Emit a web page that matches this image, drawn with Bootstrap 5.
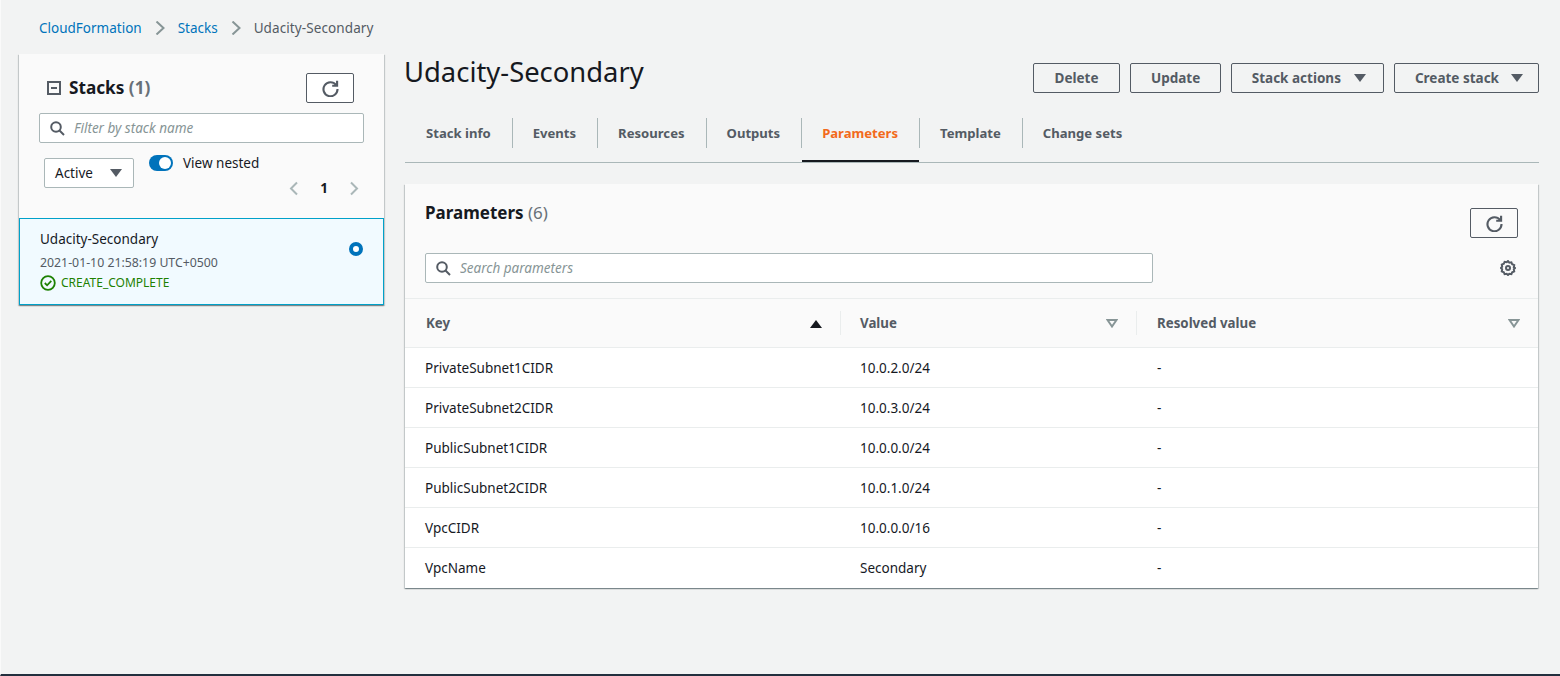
<!DOCTYPE html>
<html lang="en">
<head>
<meta charset="utf-8">
<title>Udacity-Secondary</title>
<link href="https://cdn.jsdelivr.net/npm/bootstrap@5.3.0/dist/css/bootstrap.min.css" rel="stylesheet">
<style>
html,body{height:676px;overflow:hidden}
body{background:#f2f3f3;font-family:"Noto Sans","Liberation Sans",sans-serif;font-size:13.5px;color:#16191f;letter-spacing:0;border-left:1px solid #fafafa;border-bottom:2px solid #232f3e}
.page-wrap{padding:0 20px 0 18px;height:674px}
.crumbs{height:54px;padding-left:20px;gap:12px;padding-top:2px;color:#545b64}
.crumbs a{color:#0073bb;text-decoration:none}
.crumbs span{letter-spacing:.1px}
.crumbs svg{width:12px;height:14px}
.side-col{width:365px;flex:none}
.main-col{width:1134px;margin-left:21px;margin-top:-54px;flex:none}
.side-panel{background:#fafafa;box-shadow:0 1px 1px rgba(0,28,36,.3),1px 1px 1px rgba(0,28,36,.15),-1px 1px 1px rgba(0,28,36,.15)}
.side-head{height:164px;position:relative;padding:0 20px}
.side-title{font-size:17.2px;font-weight:700;line-height:22px;margin:0}
.muted-count{color:#687078;font-weight:700}
.icon-btn{width:48px;height:30px;background:#fff;border:1px solid #545b64;border-radius:2px;padding:0;display:flex;align-items:center;justify-content:center}
.icon-btn.flush{background:transparent}
.search-box{height:30px;background:#fff;border:1px solid #aab7b8;border-radius:2px;padding:0 10px;gap:9px}
.search-box input{border:0;outline:0;background:transparent;flex:1;font-style:italic;font-size:13.5px;padding:0;color:#16191f;font-family:inherit;min-width:0}
.search-box input::placeholder{color:#879596;opacity:1}
.state-select{width:90px;height:30px;background:#fff;border:1px solid #aab7b8;border-radius:2px;padding:0 11px 0 10px;color:#16191f}
.toggle-pill{width:24px;height:16px;border-radius:8px;background:#0073bb;position:relative;display:block;flex:none}
.toggle-pill::after{content:"";position:absolute;right:2px;top:2px;width:12px;height:12px;background:#fff;border-radius:50%}
.pager{font-weight:700;gap:20px}
.stack-item{height:87px;background:#f1faff;border:1px solid #00a1c9;padding:10px 20px 0 20px;position:relative}
.stack-name{line-height:20px}
.stack-date{font-size:12.3px;line-height:16px;color:#545b64;margin-top:6px}
.stack-status{font-size:12px;line-height:16px;color:#1d8102;gap:5px;margin-top:4px}
.radio-dot{position:absolute;right:20px;top:23px;width:14px;height:14px;border-radius:50%;border:4px solid #0073bb;background:#fff}
.page-title{font-size:27.4px;font-weight:400;line-height:36px;margin:0}
.top-row{height:109px;padding-top:63px;position:relative}
.title-spot{position:absolute;left:-1px;top:54px}
.act-btn{height:30px;background:transparent;border:1px solid #545b64;border-radius:2px;color:#545b64;font-weight:700;font-size:13.5px;padding:1px 20px 0;display:flex;align-items:center;gap:12px;line-height:1}
.act-btn svg{margin-top:-1px}
.act-btn.btn-delete{padding-left:21px;padding-right:21px}
.act-btn.btn-update{padding-left:19.5px;padding-right:19.5px}
.act-btn.caret-wide{padding-right:17px;gap:13px}
.act-btn.caret-slim{padding-right:15px}
.tab-bar{height:54px;border-bottom:1px solid #aab7b8}
.tab-item{height:53px;padding:0 21px;display:flex;align-items:center;font-weight:700;font-size:13.1px;color:#545b64;position:relative;padding-bottom:3px;text-decoration:none}
.tab-item+.tab-item::before{content:"";position:absolute;left:0;top:9px;height:30px;width:1px;background:#aab7b8}
.tab-item.is-on{color:#f26a1b}
.tab-item.is-on::after{content:"";position:absolute;left:1px;right:0;bottom:0;height:2px;background:#16191f}
.param-card{margin-top:21px;margin-right:1px;background:#fff;box-shadow:0 1px 1px rgba(0,28,36,.3),1px 1px 1px rgba(0,28,36,.15),-1px 1px 1px rgba(0,28,36,.15)}
.param-head{height:115px;background:#fafafa;padding:0 20px;position:relative;border-bottom:1px solid #eaeded}
.param-title{font-size:17px;font-weight:700;line-height:22px;margin:0;padding-top:18px}
.param-title span{color:#687078;font-weight:400}
.head-refresh{position:absolute;right:20px;top:24px}
.head-search{position:absolute;left:20px;top:69px;width:728px}
.head-gear{position:absolute;right:22px;top:76px;line-height:0}
.param-table{margin:0;table-layout:fixed;width:100%;font-size:13.5px}
.param-table th{height:48px;background:#fafafa;color:#545b64;font-weight:700;font-size:13.3px;padding:2px 18px 0 20px;border-bottom:1px solid #eaeded;position:relative;vertical-align:middle}
.param-table th:first-child{padding-left:21px}
.param-table th+th::before{content:"";position:absolute;left:0;top:12px;height:24px;width:1px;background:#eaeded}
.param-table td{height:40px;padding:2px 20px 0;color:#16191f;border-bottom:1px solid #eaeded;vertical-align:middle;line-height:18px}
.param-table tr:last-child td{border-bottom:0;height:41px;padding-top:0}
.param-table th:nth-child(3),.param-table td:nth-child(3){padding-left:21px}
</style>
</head>
<body>
<div class="page-wrap">
  <nav class="crumbs d-flex align-items-center">
    <a href="#">CloudFormation</a>
    <svg viewBox="0 0 12 14" fill="none" stroke="#879596" stroke-width="2"><path d="M2.5.5l7 6.5-7 6.5"/></svg>
    <a href="#">Stacks</a>
    <svg viewBox="0 0 12 14" fill="none" stroke="#879596" stroke-width="2"><path d="M2.5.5l7 6.5-7 6.5"/></svg>
    <span>Udacity-Secondary</span>
  </nav>
  <div class="d-flex align-items-start">
    <aside class="side-col">
      <div class="side-panel">
        <div class="side-head">
          <div class="d-flex align-items-center justify-content-between" style="height:30px;position:relative;top:19px">
            <div class="d-flex align-items-center" style="padding-left:8px;gap:8px">
              <svg width="14" height="14" viewBox="0 0 14 14" fill="none" stroke="#545b64" stroke-width="2"><rect x="1" y="1" width="12" height="12"/><path d="M4 7h6"/></svg>
              <h2 class="side-title">Stacks <span class="muted-count">(1)</span></h2>
            </div>
            <button class="icon-btn" aria-label="Refresh" style="margin-right:10px">
              <svg width="17" height="17" viewBox="0 0 16 16" fill="none" stroke="#545b64" stroke-width="2"><path d="M13.2 4.6A6.6 6.6 0 1 0 14.6 8.5"/><path d="M14.2 .8v4.6H9.6"/></svg>
            </button>
          </div>
          <div class="search-box d-flex align-items-center" style="position:absolute;left:20px;right:20px;top:59px">
            <svg width="15" height="15" viewBox="0 0 15 15" fill="none" stroke="#545b64" stroke-width="2"><circle cx="6" cy="6" r="4.8"/><path d="M9.5 9.5l4.5 4.5"/></svg>
            <input type="text" placeholder="Filter by stack name" aria-label="Filter by stack name">
          </div>
          <div class="state-select d-flex align-items-center justify-content-between" style="position:absolute;left:25px;top:104px">
            <span>Active</span>
            <svg width="12" height="8" viewBox="0 0 12 8" fill="#545b64"><path d="M0 0h12L6 8z"/></svg>
          </div>
          <div class="d-flex align-items-center" style="position:absolute;left:130px;top:99px;gap:10px">
            <span class="toggle-pill"></span><span>View nested</span>
          </div>
          <div class="pager d-flex align-items-center" style="position:absolute;right:24px;top:124px">
            <svg width="12" height="15" viewBox="0 0 12 15" fill="none" stroke="#aab7b8" stroke-width="2"><path d="M9 1.5L3 7.5l6 6"/></svg>
            <span>1</span>
            <svg width="12" height="15" viewBox="0 0 12 15" fill="none" stroke="#aab7b8" stroke-width="2"><path d="M3 1.5l6 6-6 6"/></svg>
          </div>
        </div>
        <div class="stack-item">
          <div class="stack-name">Udacity-Secondary</div>
          <div class="stack-date">2021-01-10 21:58:19 UTC+0500</div>
          <div class="stack-status d-flex align-items-center">
            <svg width="16" height="16" viewBox="0 0 16 16" fill="none" stroke="#1d8102" stroke-width="1.8"><circle cx="8" cy="8" r="6.8"/><path d="M4.8 8l2.3 2.3 4.2-4.4"/></svg>
            <span>CREATE_COMPLETE</span>
          </div>
          <span class="radio-dot"></span>
        </div>
      </div>
    </aside>
    <main class="main-col">
      <div class="top-row d-flex justify-content-end gap-2">
        <h1 class="page-title title-spot">Udacity-Secondary</h1>
        <button class="act-btn btn-delete" style="margin-right:2px">Delete</button>
        <button class="act-btn btn-update" style="margin-right:2px">Update</button>
        <button class="act-btn caret-wide" style="margin-right:2px">Stack actions <svg width="12" height="8" viewBox="0 0 12 8" fill="#545b64"><path d="M0 0h12L6 8z"/></svg></button>
        <button class="act-btn caret-slim">Create stack <svg width="12" height="8" viewBox="0 0 12 8" fill="#545b64"><path d="M0 0h12L6 8z"/></svg></button>
      </div>
      <div class="tab-bar d-flex">
        <a class="tab-item" href="#">Stack info</a>
        <a class="tab-item" href="#">Events</a>
        <a class="tab-item" href="#">Resources</a>
        <a class="tab-item" href="#">Outputs</a>
        <a class="tab-item is-on" href="#">Parameters</a>
        <a class="tab-item" href="#">Template</a>
        <a class="tab-item" href="#">Change sets</a>
      </div>
      <section class="param-card">
        <div class="param-head">
          <h2 class="param-title">Parameters <span>(6)</span></h2>
          <button class="icon-btn flush head-refresh" aria-label="Refresh">
            <svg width="17" height="17" viewBox="0 0 16 16" fill="none" stroke="#545b64" stroke-width="2"><path d="M13.2 4.6A6.6 6.6 0 1 0 14.6 8.5"/><path d="M14.2 .8v4.6H9.6"/></svg>
          </button>
          <div class="search-box head-search d-flex align-items-center">
            <svg width="15" height="15" viewBox="0 0 15 15" fill="none" stroke="#545b64" stroke-width="2"><circle cx="6" cy="6" r="4.8"/><path d="M9.5 9.5l4.5 4.5"/></svg>
            <input type="text" placeholder="Search parameters" aria-label="Search parameters">
          </div>
          <span class="head-gear">
            <svg width="16" height="16" viewBox="0 0 16 16" fill="none" stroke="#545b64" stroke-width="2"><path d="M8 1l1.3 1.7 2.1-.4.8 2 2 .8-.4 2.1L15 8l-1.2 1.3.4 2.1-2 .8-.8 2-2.1-.4L8 15l-1.3-1.2-2.1.4-.8-2-2-.8.4-2.1L1 8l1.2-1.3-.4-2.1 2-.8.8-2 2.1.4z"/><circle cx="8" cy="8" r="2"/></svg>
          </span>
        </div>
        <table class="param-table">
          <colgroup><col style="width:435px"><col style="width:296px"><col></colgroup>
          <thead>
            <tr>
              <th><div class="d-flex justify-content-between align-items-center">Key <svg width="12" height="8" viewBox="0 0 12 8" fill="#16191f"><path d="M6 0l6 8H0z"/></svg></div></th>
              <th><div class="d-flex justify-content-between align-items-center">Value <svg width="12" height="9" viewBox="0 0 12 9" fill="none" stroke="#879596" stroke-width="2"><path d="M1.5 1h9L6 7.5z"/></svg></div></th>
              <th><div class="d-flex justify-content-between align-items-center">Resolved value <svg width="12" height="9" viewBox="0 0 12 9" fill="none" stroke="#879596" stroke-width="2"><path d="M1.5 1h9L6 7.5z"/></svg></div></th>
            </tr>
          </thead>
          <tbody>
            <tr><td>PrivateSubnet1CIDR</td><td>10.0.2.0/24</td><td>-</td></tr>
            <tr><td>PrivateSubnet2CIDR</td><td>10.0.3.0/24</td><td>-</td></tr>
            <tr><td>PublicSubnet1CIDR</td><td>10.0.0.0/24</td><td>-</td></tr>
            <tr><td>PublicSubnet2CIDR</td><td>10.0.1.0/24</td><td>-</td></tr>
            <tr><td>VpcCIDR</td><td>10.0.0.0/16</td><td>-</td></tr>
            <tr><td>VpcName</td><td>Secondary</td><td>-</td></tr>
          </tbody>
        </table>
      </section>
    </main>
  </div>
</div>
<script src="https://cdn.jsdelivr.net/npm/bootstrap@5.3.0/dist/js/bootstrap.bundle.min.js"></script>
</body>
</html>
